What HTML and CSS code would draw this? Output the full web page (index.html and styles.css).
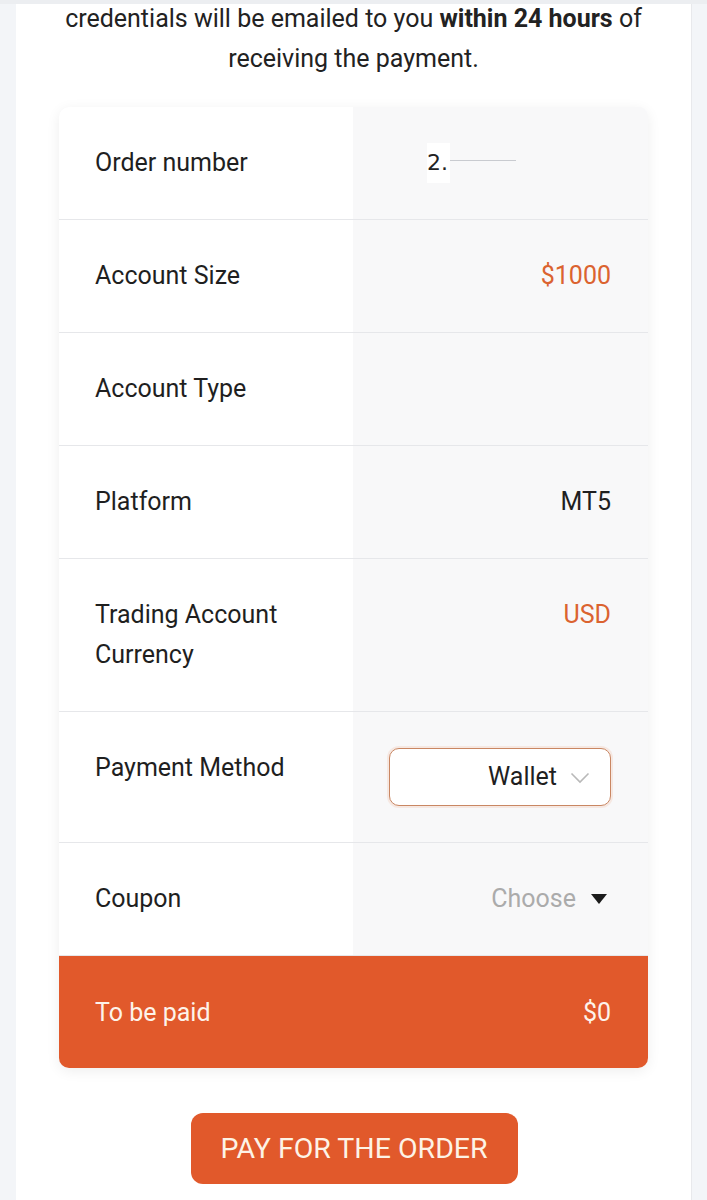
FILE: index.html
```html
<!DOCTYPE html>
<html lang="en">
<head>
<meta charset="utf-8">
<title>Order</title>
<link rel="stylesheet" href="styles.css">
</head>
<body>
<div class="panel">
  <p class="intro">credentials will be emailed to you <b>within 24 hours</b> of receiving the payment.</p>
  <div class="card">
    <div class="row">
      <div class="label">Order number</div>
      <div class="value order"><span class="num">2.</span><span class="mask"></span></div>
    </div>
    <div class="row">
      <div class="label">Account Size</div>
      <div class="value accent">$1000</div>
    </div>
    <div class="row">
      <div class="label">Account Type</div>
      <div class="value"></div>
    </div>
    <div class="row">
      <div class="label">Platform</div>
      <div class="value">MT5</div>
    </div>
    <div class="row">
      <div class="label">Trading Account<br>Currency</div>
      <div class="value accent">USD</div>
    </div>
    <div class="row">
      <div class="label">Payment Method</div>
      <div class="value">
        <div class="select">
          <span>Wallet</span>
          <svg class="chev" width="20" height="12" viewBox="0 0 20 12"><path d="M1.5 1.5 L10 10 L18.5 1.5" fill="none" stroke="#b9b9b9" stroke-width="1.6"/></svg>
        </div>
      </div>
    </div>
    <div class="row last">
      <div class="label">Coupon</div>
      <div class="value coupon"><span class="placeholder">Choose</span><svg width="16" height="10" viewBox="0 0 16 10"><path d="M0 0 H16 L8 10 Z" fill="#1c1c1c"/></svg></div>
    </div>
    <div class="total">
      <span>To be paid</span>
      <span>$0</span>
    </div>
  </div>
  <div class="actions">
    <button class="pay">PAY FOR THE ORDER</button>
  </div>
</div>
</body>
</html>
```
FILE: styles.css
```css
html, body {
  margin: 0;
  padding: 0;
}
body {
  background: #f3f5f8;
  font-family: Roboto, "Liberation Sans", Arial, sans-serif;
  color: #1f1f1f;
  height: 1200px;
  overflow: hidden;
  border-top: 4px solid #eceef1;
}
.panel {
  margin: 0 15px 0 16px;
  background: #ffffff;
  height: 1196px;
  border-right: 1px solid #e8e9ec;
  overflow: hidden;
}
.intro {
  margin: -5px 0 0;
  font-size: 25px;
  line-height: 40px;
  text-align: center;
  color: #222;
  padding: 0 30px;
}
.intro b {
  font-weight: 700;
}
.card {
  width: 589px;
  margin: 28px auto 0;
  border-radius: 10px;
  overflow: hidden;
  box-shadow: 0 3px 14px rgba(0, 0, 0, 0.07);
  background: #f8f8f9;
}
.row {
  display: grid;
  grid-template-columns: 294px 1fr;
  border-bottom: 1px solid #e6e7ea;
}
.label {
  background: #ffffff;
  padding: 36px 0 36px 36px;
  font-size: 25px;
  line-height: 40px;
  color: #1f1f1f;
}
.value {
  background: #f8f8f9;
  padding: 36px 37px 36px 0;
  font-size: 25px;
  line-height: 40px;
  text-align: right;
  color: #1f1f1f;
  display: flex;
  justify-content: flex-end;
  align-items: flex-start;
  min-height: 40px;
}
.accent {
  color: #db6330;
}
.order {
  justify-content: flex-start;
  padding-left: 74px;
  align-items: center;
}
.num {
  font-family: "DejaVu Sans", sans-serif;
  font-size: 22px;
  background: #fff;
  padding-right: 2px;
  color: #222;
}
.mask {
  width: 66px;
  height: 1px;
  background: #c9cbd0;
  margin-top: -6px;
}
.select {
  box-sizing: border-box;
  width: 222px;
  height: 58px;
  border: 1px solid #c98763;
  border-radius: 10px;
  background: #fff;
  box-shadow: 0 0 0 2px rgba(240, 160, 120, 0.18);
  display: flex;
  align-items: center;
  justify-content: flex-end;
  padding-right: 20px;
  gap: 13px;
  font-size: 25px;
  color: #1f1f1f;
}
.chev {
  margin-top: 2px;
}
.coupon {
  align-items: center;
  gap: 15px;
  padding-right: 41px;
}
.placeholder {
  color: #ababab;
}
.total {
  background: #e1592b;
  color: #fdf3ea;
  display: flex;
  justify-content: space-between;
  align-items: center;
  height: 112px;
  padding: 0 37px 0 36px;
  font-size: 25px;
}
.actions {
  display: flex;
  justify-content: center;
  margin-top: 45px;
}
.pay {
  width: 327px;
  height: 71px;
  border: none;
  border-radius: 12px;
  background: #e1592b;
  color: #fdf3e6;
  font-family: Roboto, "Liberation Sans", sans-serif;
  font-size: 28.5px;
  letter-spacing: 0;
  padding: 0;
  margin-left: 1px;
}
```
